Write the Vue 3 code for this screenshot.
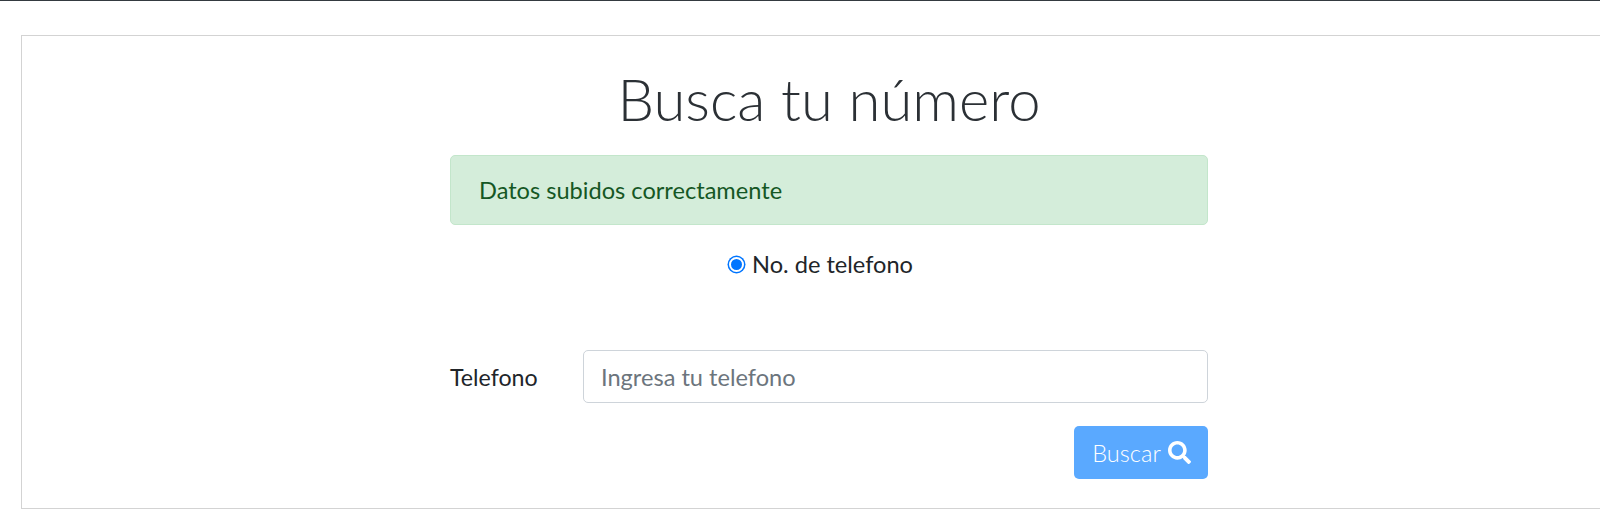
<script setup>
</script>

<template>
  <div class="page">
    <div class="topbar"></div>
    <section class="card">
      <h1 class="title">Busca tu número</h1>
      <div class="column">
        <div class="alert">Datos subidos correctamente</div>
        <label class="radio">
          <span class="dot"></span>
          <span>No. de telefono</span>
        </label>
        <div class="field">
          <span class="label">Telefono</span>
          <div class="input">Ingresa tu telefono</div>
        </div>
        <div class="actions">
          <button class="btn" type="button">
            <span>Buscar</span>
            <svg class="icon" viewBox="0 0 512 512" width="23" height="23" aria-hidden="true">
              <path fill="#fff" d="M505 442.7L405.3 343c-4.500-4.500-10.600-7-17-7H372c27.600-35.300 44-79.700 44-128C416 93.100 322.900 0 208 0S0 93.100 0 208s93.100 208 208 208c48.300 0 92.700-16.400 128-44v16.300c0 6.400 2.500 12.500 7 17l99.700 99.700c9.400 9.400 24.600 9.400 33.900 0l28.300-28.300c9.400-9.400 9.400-24.600.1-34zM208 336c-70.700 0-128-57.200-128-128 0-70.700 57.200-128 128-128 70.700 0 128 57.200 128 128 0 70.700-57.200 128-128 128z"/>
            </svg>
          </button>
        </div>
      </div>
    </section>
  </div>
</template>

<style>
html, body { margin: 0; background: #fff; overflow: hidden; }
</style>

<style scoped>
.page {
  width: 1600px;
  height: 519px;
  overflow: hidden;
  font-family: Lato, "Liberation Sans", sans-serif;
  color: #212529;
  background: #fff;
}
.topbar { height: 1px; background: #343a40; }
.card {
  box-sizing: border-box;
  width: 1616px;
  height: 474px;
  margin: 34px 0 0 21px;
  border: 1px solid #d3d3d3;
  display: flex;
  flex-direction: column;
  align-items: center;
}
.title {
  margin: 18px 0 0;
  height: 90px;
  font-size: 58px;
  line-height: 90px;
  font-weight: 300;
  color: #2b3035;
}
.column { width: 758px; margin-top: 11px; }
.alert {
  box-sizing: border-box;
  height: 70px;
  padding: 0 28px;
  display: flex;
  align-items: center;
  background: #d4edda;
  border: 1px solid #c3e6cb;
  border-radius: 5px;
  color: #155724;
  font-size: 23.6px;
}
.radio {
  margin-top: 25px;
  height: 28px;
  padding-right: 16px;
  display: flex;
  justify-content: center;
  align-items: center;
  gap: 8px;
  font-size: 23.6px;
  color: #212529;
}
.dot {
  box-sizing: border-box;
  width: 15px;
  height: 15px;
  border-radius: 50%;
  border: 2px solid #fff;
  background: #0075ff;
  box-shadow: 0 0 0 1.5px #0075ff;
}
.field {
  margin-top: 72px;
  display: flex;
  align-items: center;
}
.label { width: 133px; font-size: 23.2px; color: #212529; }
.input {
  box-sizing: border-box;
  flex: 1;
  height: 53px;
  padding: 0 17px;
  display: flex;
  align-items: center;
  border: 1px solid #ced4da;
  border-radius: 5px;
  font-size: 23.6px;
  color: #6c757d;
}
.actions { margin-top: 23px; display: flex; justify-content: flex-end; }
.btn {
  box-sizing: border-box;
  width: 134px;
  height: 53px;
  padding: 0 0 0 1px;
  display: flex;
  align-items: center;
  justify-content: center;
  gap: 7px;
  border: 0;
  border-radius: 5px;
  background: #5aa9ff;
  color: #fff;
  font-family: inherit;
  font-size: 23.6px;
  font-weight: 300;
}
.icon { flex: none; }
</style>
